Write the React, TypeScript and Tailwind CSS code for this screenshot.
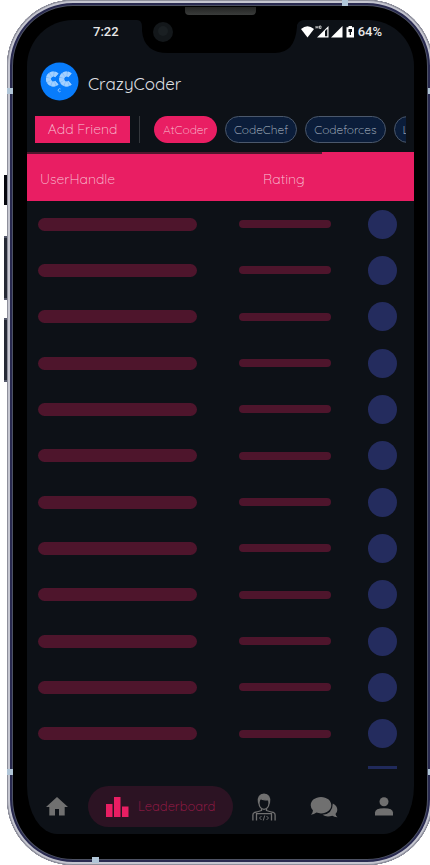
import type { ReactNode } from "react";

const platforms = ["AtCoder", "CodeChef", "Codeforces", "LeetCode"];
const rows = Array.from({ length: 12 }, (_, i) => i);

function SideButtons() {
  return (
    <div aria-hidden="true">
      <span className="absolute left-[4px] top-[175px] h-[30px] w-[4px] bg-[#07080f]" />
      <span className="absolute left-[4px] top-[236px] h-[64px] w-[3px] border-y-2 border-[#55586a] bg-[#262a36]" />
      <span className="absolute left-[4px] top-[318px] h-[64px] w-[3px] border-y-2 border-[#55586a] bg-[#262a36]" />
    </div>
  );
}

function FrameDetails() {
  return (
    <div aria-hidden="true">
      <span className="absolute left-0 top-[88px] h-[6px] w-[6px] bg-[#b1c6d8]" />
      <span className="absolute right-0 top-[88px] h-[6px] w-[5px] bg-[#b1c6d8]" />
      <span className="absolute bottom-[90px] left-0 h-[6px] w-[6px] bg-[#b1c6d8]" />
      <span className="absolute bottom-[90px] right-0 h-[6px] w-[5px] bg-[#b1c6d8]" />
      <span className="absolute right-[85px] top-0 h-[6px] w-[6px] bg-[#b1c6d8]" />
      <span className="absolute bottom-[2px] left-[85px] h-[6px] w-[7px] bg-[#b1c6d8]" />
      <svg className="absolute left-[130px] top-[7px] h-[46px] w-[168px]" viewBox="0 0 168 46">
        <defs>
          <linearGradient id="speaker" x1="0" y1="0" x2="0" y2="1">
            <stop offset="0" stopColor="#232423" />
            <stop offset="1" stopColor="#3a3c3b" />
          </linearGradient>
        </defs>
        <path d="M0 0H168V13Q162 13 160 18V20Q158 46 138 46H31Q7 46 5 24V20Q5 13 0 13Z" fill="#000" />
        <circle cx="26" cy="25" r="10" fill="#13171a" />
        <circle cx="26" cy="24" r="5" fill="#1a1f22" />
        <path d="M48 0H119V4Q119 8 115 8H52Q48 8 48 4Z" fill="url(#speaker)" />
      </svg>
    </div>
  );
}

function StatusIcons() {
  return (
    <svg width="54" height="14" viewBox="0 0 54 14" fill="#fff" aria-hidden="true">
      <path d="M0 4Q6.500-1.500 13 4L6.500 12.500Z" />
      <path d="M16 12.500L27.500 1V12.500Z" />
      <path d="M24 6L26.300 3.700V11.300H24Z" fill="#0d1117" />
      <path d="M15 1V3.500M17 1V3.500M15 2.200H17M18.500 1H20V3.500H18.500Z" fill="none" stroke="#ddd" strokeWidth=".8" />
      <path d="M30 12.500L41.500 1V12.500Z" />
      <path d="M45.500 2.200H47.500V1H51V2.200H53V12.500H45.500Z" />
      <path d="M47.500 4H51V7H50V10H48.700V7H47.500Z" fill="#0d1117" />
    </svg>
  );
}

function Logo() {
  return (
    <svg width="39" height="39" viewBox="0 0 39 39" aria-hidden="true">
      <circle cx="19.500" cy="19.500" r="19" fill="#087cfb" />
      <g fill="none" stroke="#7cbcff" strokeWidth="5">
        <path d="M16.800 13.300A5 5 0 1 0 16.800 20.700" />
        <path d="M30 13.300A5 5 0 1 0 30 20.700" />
      </g>
      <g fill="none" stroke="#a3d0ff" strokeWidth="5" strokeDasharray="2.800 .700">
        <path d="M16.800 13.300A5 5 0 1 0 16.800 20.700" />
        <path d="M30 13.300A5 5 0 1 0 30 20.700" />
      </g>
      <path d="M20.500 27A1.500 1.500 0 1 0 20.500 29.500" fill="none" stroke="#8fc4ff" />
    </svg>
  );
}

function NavButton({ label, children }: { label: string; children: ReactNode }) {
  return (
    <button type="button" aria-label={label} className="flex h-10 w-[30px] items-center justify-center text-[#707070]">
      {children}
    </button>
  );
}

function HomeIcon() {
  return (
    <svg width="22" height="19" viewBox="0 0 22 19" fill="currentColor">
      <path d="M11 0L22 10H18.700V18.500H13V12H9V18.500H3.300V10H0Z" />
    </svg>
  );
}

function DeveloperIcon() {
  return (
    <svg width="24" height="28" viewBox="0 0 24 28" fill="none" stroke="currentColor" strokeWidth="1.300">
      <path d="M6.500 9Q5.500 1.500 12 1.200Q18.500 1.500 17.500 9L16.500 6.500Q11 7.500 8.500 5.500Z" fill="currentColor" />
      <path d="M7 7V10.500Q7.500 16 12 16.300Q16.500 16 17 10.500V7" />
      <path d="M9.500 15.500V17.500Q5 19 2.500 19.500Q.900 20 .900 22V27.500M14.500 15.500V17.500Q19 19 21.500 19.500Q23.100 20 23.100 22V27.500" />
      <path d="M4.500 27.500V20.700H19.500V27.500" />
      <path d="M9.500 23L7.500 25L9.500 27M14.500 23L16.500 25L14.500 27M12.700 22.500L11.300 27.500" strokeWidth="1" />
    </svg>
  );
}

function ChatIcon() {
  return (
    <svg width="28" height="22" viewBox="0 0 28 22" fill="currentColor">
      <path d="M11 1C16.800 1 21.300 4.600 21.300 9.200S16.800 17.400 11 17.400Q8.500 17.400 6.500 16.600Q4 18.700 .900 18.800Q2.700 17 3 14.400Q.700 12 .700 9.200C.700 4.600 5.200 1 11 1Z" />
      <path d="M22.800 7.500Q27.400 9.700 27.300 14Q27.200 16.500 25.500 18Q25.800 20 27.500 21.200Q24.500 21.300 22.300 19.800Q16.500 21.700 12.500 18.800Q22.500 18.200 22.800 7.500Z" />
    </svg>
  );
}

function PersonIcon() {
  return (
    <svg width="20" height="19" viewBox="0 0 20 19" fill="currentColor">
      <circle cx="10" cy="4.800" r="4.500" />
      <path d="M1 18.500V15.500Q1 11.200 10 11.200T19 15.500V18.500Z" />
    </svg>
  );
}

export default function App() {
  return (
    <div className="relative overflow-hidden bg-white pl-[7px] font-[Quicksand,Lato,sans-serif]">
      <SideButtons />
      <div className="relative -mr-[3px] rounded-[66px] bg-black pb-[31px] pl-[20px] pr-[19px] pt-[20px] shadow-[inset_0_0_0_1px_#8e8f9b,inset_0_0_0_3px_#c5c6d0,inset_0_0_0_5px_#292a50,inset_0_0_0_6px_#4d5263]">
        <FrameDetails />
        <main className="overflow-hidden bg-[#0d1117] [border-radius:46px_46px_30px_30px/46px_46px_48px_48px]">
          <div className="flex h-[24px] items-center justify-between pl-[66px] pr-[32px] font-[Roboto,sans-serif] text-[13px] font-medium text-[#e8e8e8]">
            <span>7:22</span>
            <div className="flex items-center gap-[3px]">
              <StatusIcons />
              <span>64%</span>
            </div>
          </div>
          <header className="flex h-[72px] items-center gap-[9px] px-[13px] pt-[3px]">
            <Logo />
            <h1 className="pt-1 text-[17px] leading-6 text-[#dedfe0]">CrazyCoder</h1>
          </header>
          <div className="mr-2 flex h-[27px] items-center overflow-hidden pl-2">
            <button type="button" className="h-[27px] w-[95px] shrink-0 bg-[#e91e63] text-[14px] font-light text-[#f8c4d5]">
              Add Friend
            </button>
            <span className="ml-[9px] mr-[14px] h-[27px] w-px shrink-0 bg-[#34373c]" />
            <div className="flex gap-2">
              {platforms.map((p, i) => (
                <button
                  key={p}
                  type="button"
                  className={
                    i === 0
                      ? "h-[27px] shrink-0 rounded-full bg-[#e91e63] px-[9px] text-[12px] font-light text-[#f8c4d5]"
                      : "h-[27px] shrink-0 rounded-full border border-[#4b586c] bg-[#0b1d3a] px-2 text-[12px] font-light text-[#b8c0cc]"
                  }
                >
                  {p}
                </button>
              ))}
            </div>
          </div>
          <div className="mt-[9px] h-[49px] bg-[#e91e63]">
            <div className="h-[2px] w-[295px] bg-[#51172e]" />
            <div className="flex h-[50px] items-center pl-[13px] text-[14px] font-light text-[#f8c4d5]">
              <span className="w-[223px]">UserHandle</span>
              <span>Rating</span>
            </div>
          </div>
          <div className="grid h-[556px] grid-rows-12">
            {rows.map((r) => (
              <div key={r} className="flex items-center pl-[11px] pr-[17px]">
                <span className="h-[13px] w-[159px] rounded-full bg-[#4e152c]" />
                <span className="ml-[42px] h-[8px] w-[92px] rounded-full bg-[#4e152c]" />
                <span className="ml-auto size-[29px] rounded-full bg-[#242c5e]" />
              </div>
            ))}
          </div>
          <div className="flex h-[12px] items-end justify-end pr-[17px]">
            <span className="h-[3px] w-[29px] bg-[#202a5b]" />
          </div>
          <nav className="flex h-[65px] items-center gap-4 px-[15px] pt-[10px]">
            <NavButton label="Home">
              <HomeIcon />
            </NavButton>
            <button
              type="button"
              aria-current="page"
              className="flex h-[41px] w-[145px] shrink-0 items-center gap-[9px] rounded-full bg-[#2c1323] pl-[18px] text-[13px] font-light text-[#a01b4b]"
            >
              <svg width="23" height="20" viewBox="0 0 23 20" fill="#e91e63" aria-hidden="true">
                <path d="M0 7H6.500V20H0ZM8 0H14.500V20H8ZM16 9.500H22.500V20H16Z" />
              </svg>
              Leaderboard
            </button>
            <div className="flex flex-1 justify-between">
              <NavButton label="Developer">
                <DeveloperIcon />
              </NavButton>
              <NavButton label="Messages">
                <ChatIcon />
              </NavButton>
              <NavButton label="Profile">
                <PersonIcon />
              </NavButton>
            </div>
          </nav>
        </main>
      </div>
    </div>
  );
}
